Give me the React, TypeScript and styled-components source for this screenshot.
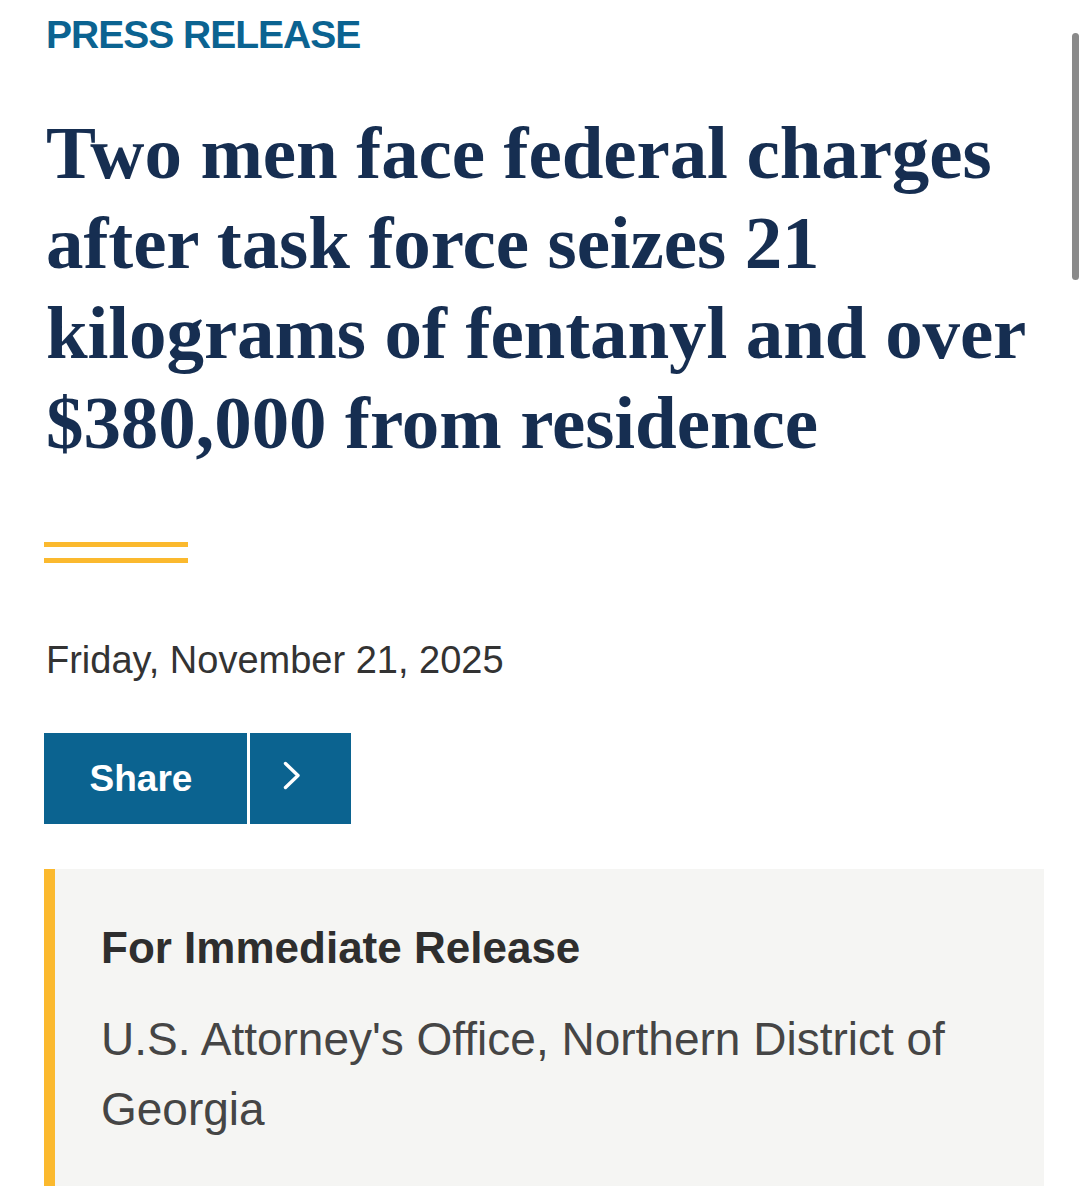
import styled, { createGlobalStyle } from 'styled-components';

const GlobalStyle = createGlobalStyle`
  html, body {
    margin: 0;
    padding: 0;
    background: #fff;
  }
  body {
    font-family: 'Liberation Sans', Arial, sans-serif;
    -webkit-font-smoothing: antialiased;
  }
`;

const Page = styled.main`
  position: relative;
  width: 1088px;
  min-height: 1200px;
  box-sizing: border-box;
  padding: 11px 44px 0 44px;
  overflow: hidden;
`;

const Eyebrow = styled.div`
  margin: 0 0 0 2px;
  font-size: 39px;
  line-height: 48px;
  font-weight: 700;
  color: #0b6391;
  letter-spacing: -1px;
`;

const Title = styled.h1`
  margin: 49px 0 0 2px;
  font-family: 'Liberation Serif', 'Times New Roman', serif;
  font-size: 75px;
  line-height: 90px;
  font-weight: 700;
  color: #162e51;
  letter-spacing: -0.1px;
`;

const Rule = styled.div`
  margin-top: 74px;
  width: 144px;
  display: flex;
  flex-direction: column;
  gap: 11px;

  span {
    display: block;
    height: 5px;
    background: #fbb92e;
  }
`;

const DateLine = styled.p`
  margin: 74px 0 0 2px;
  font-size: 38px;
  line-height: 46px;
  color: #333;
`;

const ShareGroup = styled.div`
  margin-top: 50px;
  display: flex;
  gap: 3px;
`;

const ShareButton = styled.button<{ $width: number; $shift: number }>`
  width: ${p => p.$width}px;
  height: 91px;
  border: 0;
  padding: 0 ${p => p.$shift}px ${p => (p.$shift > 10 ? 6 : 0)}px 0;
  margin: 0;
  background: #0b6390;
  color: #fff;
  font-family: 'Liberation Sans', Arial, sans-serif;
  font-size: 37px;
  font-weight: 700;
  display: flex;
  align-items: center;
  justify-content: center;
`;

const InfoBox = styled.section`
  margin-top: 45px;
  width: 1000px;
  box-sizing: border-box;
  background: #f5f5f3;
  border-left: 11px solid #fbb92e;
  padding: 53px 46px 42px;
`;

const InfoTitle = styled.h2`
  margin: 0;
  font-size: 44px;
  line-height: 52px;
  font-weight: 700;
  color: #2e2e2e;
`;

const InfoText = styled.p`
  margin: 30px 0 0;
  font-size: 46px;
  line-height: 70px;
  color: #454545;
`;

const ScrollThumb = styled.div`
  position: absolute;
  top: 33px;
  right: 9px;
  width: 7px;
  height: 247px;
  border-radius: 4px;
  background: #8a8a8a;
`;

const Chevron = () => (
  <svg width="18" height="29" viewBox="0 0 18 29" fill="none">
    <path d="M2.5 2.5 L15 14.5 L2.5 26.5" stroke="#fff" strokeWidth="3.4" strokeLinecap="round" strokeLinejoin="round" />
  </svg>
);

export default function App() {
  return (
    <>
      <GlobalStyle />
      <Page>
        <Eyebrow>PRESS RELEASE</Eyebrow>
        <Title>
          Two men face federal charges after task force seizes 21 kilograms of fentanyl and over $380,000 from
          residence
        </Title>
        <Rule>
          <span />
          <span />
        </Rule>
        <DateLine>Friday, November 21, 2025</DateLine>
        <ShareGroup>
          <ShareButton $width={203} $shift={9}>
            Share
          </ShareButton>
          <ShareButton $width={101} $shift={17} aria-label="Open share options">
            <Chevron />
          </ShareButton>
        </ShareGroup>
        <InfoBox>
          <InfoTitle>For Immediate Release</InfoTitle>
          <InfoText>U.S. Attorney's Office, Northern District of Georgia</InfoText>
        </InfoBox>
        <ScrollThumb />
      </Page>
    </>
  );
}
